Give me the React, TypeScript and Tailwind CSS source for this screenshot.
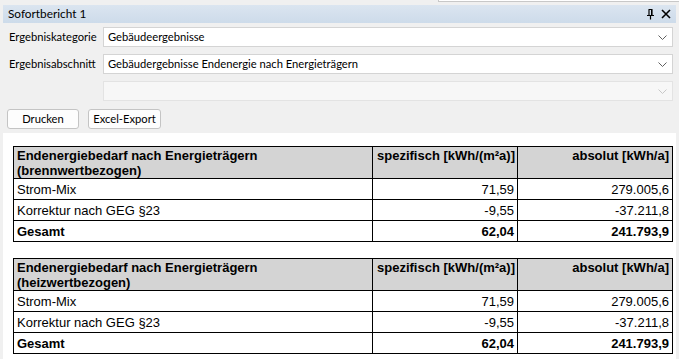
import React from "react";

const ui = { fontFamily: 'Lato, "Segoe UI", sans-serif' };
const tbl = { fontFamily: '"Liberation Sans", Arial, sans-serif' };

function Chevron({ disabled }: { disabled?: boolean }) {
  return (
    <svg width="9" height="5" viewBox="0 0 9 5" className="shrink-0">
      <path d="M0.5 0.5 L4.5 4.5 L8.5 0.5" fill="none" stroke={disabled ? "#c8c8c8" : "#606060"} strokeWidth="1" />
    </svg>
  );
}

function Select({ value, disabled }: { value: string; disabled?: boolean }) {
  return (
    <div
      className={`flex-1 h-[20px] flex items-center justify-between pl-[4px] pr-[5px] border ${
        disabled ? "bg-[#f7f7f7] border-[#e3e3e3]" : "bg-white border-[#d4d4d4]"
      }`}
    >
      <span className="text-[11.2px] leading-none text-black whitespace-nowrap">{value}</span>
      <Chevron disabled={disabled} />
    </div>
  );
}

type Row = { label: string; spec: string; abs: string; bold?: boolean };

function ReportTable({ title, sub, rows }: { title: string; sub: string; rows: Row[] }) {
  return (
    <table className="border-collapse w-[659px] text-[13px] text-black table-fixed" style={tbl}>
      <colgroup>
        <col className="w-[359px]" />
        <col className="w-[145px]" />
        <col className="w-[155px]" />
      </colgroup>
      <tbody>
        <tr className="bg-[#d4d4d4] font-bold align-top">
          <td className="border border-black px-[3px] pt-[1px] pb-0 h-[31px] leading-[15px]">
            {title}
            <br />
            {sub}
          </td>
          <td className="border border-black px-[2px] pt-[1px] text-right leading-[15px] whitespace-nowrap">
            spezifisch [kWh/(m²a)]
          </td>
          <td className="border border-black px-[3px] pt-[1px] text-right leading-[15px]">absolut [kWh/a]</td>
        </tr>
        {rows.map((r) => (
          <tr key={r.label} className={`h-[21px] ${r.bold ? "font-bold" : ""}`}>
            <td className="border border-black px-[3px] py-0 leading-[15px]">{r.label}</td>
            <td className="border border-black px-[3px] py-0 text-right leading-[15px]">{r.spec}</td>
            <td className="border border-black px-[3px] py-0 text-right leading-[15px]">{r.abs}</td>
          </tr>
        ))}
      </tbody>
    </table>
  );
}

const rows: Row[] = [
  { label: "Strom-Mix", spec: "71,59", abs: "279.005,6" },
  { label: "Korrektur nach GEG §23", spec: "-9,55", abs: "-37.211,8" },
  { label: "Gesamt", spec: "62,04", abs: "241.793,9", bold: true },
];

export default function App() {
  return (
    <div className="w-[679px] h-[359px] bg-[#f0f0f0] flex flex-col overflow-hidden" style={ui}>
      {/* top strip */}
      <div className="h-[5px] flex shrink-0">
        <div className="flex-1" />
        <div className="w-[241px] h-[2px] bg-white border-b border-l border-[#c8c8c8]" />
      </div>
      {/* title bar */}
      <div className="mx-[3px] h-[18px] shrink-0 flex items-center justify-between pl-[5px] pr-[5px] bg-gradient-to-b from-[#dbe5f0] to-[#cddbea]">
        <span className="text-[11.8px] leading-none text-black">Sofortbericht 1</span>
        <div className="flex items-center gap-[6px]">
          <svg width="9" height="11" viewBox="0 0 9 11">
            <path d="M2.5 0.5 H6.5 M3 0.5 V6 M6 0.5 V6 M1 6.5 H8 M4.5 6.5 V10.5" fill="none" stroke="#000" strokeWidth="1.2" />
            <rect x="5" y="1" width="1" height="5" fill="#000" />
          </svg>
          <svg width="10" height="10" viewBox="0 0 10 10">
            <path d="M1 1 L9 9 M9 1 L1 9" stroke="#000" strokeWidth="1.6" />
          </svg>
        </div>
      </div>
      {/* form */}
      <div className="flex flex-col gap-[7px] pt-[4px] pl-[9px] pr-[6px] shrink-0">
        <div className="flex items-center">
          <span className="w-[94px] text-[11.2px] leading-none whitespace-nowrap">Ergebniskategorie</span>
          <Select value="Gebäudeergebnisse" />
        </div>
        <div className="flex items-center">
          <span className="w-[94px] text-[11.2px] leading-none whitespace-nowrap">Ergebnisabschnitt</span>
          <Select value="Gebäudergebnisse Endenergie nach Energieträgern" />
        </div>
        <div className="flex items-center">
          <span className="w-[94px]" />
          <Select value="" disabled />
        </div>
      </div>
      <div className="flex gap-[9px] pl-[7px] pt-[8px] shrink-0">
        <button className="w-[72px] h-[20px] bg-[#fdfdfd] border border-[#c4c4c4] rounded-[3px] text-[11.2px] leading-none">
          Drucken
        </button>
        <button className="w-[73px] h-[20px] bg-[#fdfdfd] border border-[#c4c4c4] rounded-[3px] text-[11.2px] leading-none">
          Excel-Export
        </button>
      </div>
      {/* content */}
      <div className="mt-[4px] mx-[3px] flex-1 bg-white pl-[10px] pt-[13px] flex flex-col gap-[16px]">
        <ReportTable title="Endenergiebedarf nach Energieträgern" sub="(brennwertbezogen)" rows={rows} />
        <ReportTable title="Endenergiebedarf nach Energieträgern" sub="(heizwertbezogen)" rows={rows} />
      </div>
    </div>
  );
}
